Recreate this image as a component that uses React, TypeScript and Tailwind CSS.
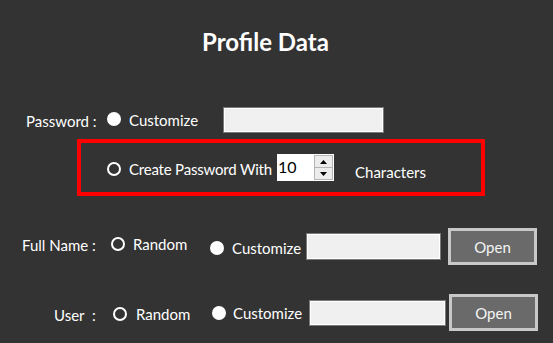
const font = { fontFamily: 'Lato, "Open Sans", sans-serif' }

function Dot({ filled }: { filled?: boolean }) {
  return filled ? (
    <span className="block h-[14px] w-[14px] shrink-0 rounded-full bg-white" />
  ) : (
    <span className="block h-[14px] w-[14px] shrink-0 rounded-full border-2 border-white" />
  )
}

function TextBox({ className }: { className: string }) {
  return <div className={`shrink-0 border border-[#7a7a7a] bg-[#f0f0f0] shadow-[inset_0_0_0_1px_#ffffff] ${className}`} />
}

function OpenButton() {
  return (
    <button className="flex h-[37px] w-[89px] shrink-0 items-center justify-center border-[3px] border-[#c8c8c8] bg-[#6a6a6a] text-[15px] text-[#f4f4f4]">
      Open
    </button>
  )
}

function Spinner() {
  return (
    <div className="flex h-[27px] w-[57px] shrink-0 bg-white">
      <span className="flex-1 pl-[1px] pt-[3px] text-[16px] leading-[20px] text-black">10</span>
      <div className="my-[1px] mr-[1px] flex w-[19px] flex-col border border-[#b4b4b4] bg-[#ececec]">
        <div className="flex flex-1 items-center justify-center border-b border-[#b4b4b4]">
          <svg width="7" height="4" viewBox="0 0 7 4"><path d="M0 4 L3.5 0 L7 4 Z" fill="#000" /></svg>
        </div>
        <div className="flex flex-1 items-center justify-center">
          <svg width="7" height="4" viewBox="0 0 7 4"><path d="M0 0 L7 0 L3.5 4 Z" fill="#000" /></svg>
        </div>
      </div>
    </div>
  )
}

export default function App() {
  return (
    <div className="h-[343px] w-[553px] overflow-hidden bg-[#333333] text-[15px] leading-[20px] text-white" style={font}>
      <div className="h-[107px] pl-[202px] pt-[28px]">
        <h1 className="text-[24px] font-bold leading-[28px]">Profile Data</h1>
      </div>

      <div className="flex h-[26px] items-center">
        <span className="w-[107px] shrink-0 pl-[26px] pt-[2px]">Password :</span>
        <div className="flex w-[116px] shrink-0 items-center gap-[8px]">
          <span className="-mt-[2px]"><Dot filled /></span>
          <span>Customize</span>
        </div>
        <TextBox className="h-[26px] w-[161px]" />
      </div>

      <div className="ml-[77px] mt-[6px] flex h-[57px] w-[408px] items-start border-4 border-[#ff0000]">
        <span className="ml-[26px] mt-[19px]"><Dot /></span>
        <span className="ml-[8px] mt-[16px] w-[148px] shrink-0 whitespace-nowrap tracking-[-0.2px]">Create Password With</span>
        <div className="mt-[11px]"><Spinner /></div>
        <span className="ml-[21px] mt-[19px]">Characters</span>
      </div>

      <div className="mt-[32px] flex h-[37px] items-center">
        <span className="w-[111px] shrink-0 pl-[22px] -mt-[4px]">Full Name :</span>
        <div className="flex w-[99px] shrink-0 items-center gap-[8px] -mt-[5px]">
          <Dot />
          <span>Random</span>
        </div>
        <div className="flex w-[96px] shrink-0 items-center gap-[8px] mt-[3px]">
          <Dot filled />
          <span>Customize</span>
        </div>
        <TextBox className="h-[27px] w-[135px]" />
        <div className="ml-[7px]"><OpenButton /></div>
      </div>

      <div className="mt-[29px] flex h-[37px] items-center">
        <span className="w-[113px] shrink-0 whitespace-pre pl-[54px] mt-[4px]">User  :</span>
        <div className="flex w-[99px] shrink-0 items-center gap-[9px] mt-[2px]">
          <Dot />
          <span>Random</span>
        </div>
        <div className="flex w-[97px] shrink-0 items-center gap-[7px] mt-[1px]">
          <Dot filled />
          <span>Customize</span>
        </div>
        <TextBox className="h-[26px] w-[137px]" />
        <div className="ml-[3px]"><OpenButton /></div>
      </div>
    </div>
  )
}
